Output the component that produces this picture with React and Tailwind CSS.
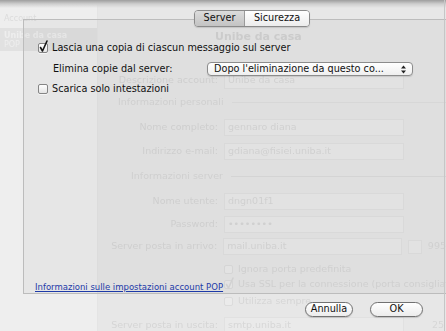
import React from "react"

function Check({ checked, ghost }) {
  return (
    <span
      className={
        ghost
          ? "relative w-[9px] h-[9px] shrink-0 rounded-[2px] border border-[#dcdcdc] bg-[#ebebeb]"
          : "relative w-[10px] h-[10px] shrink-0 rounded-[2px] border border-[#858585] bg-linear-to-b from-white to-[#e4e4e4] shadow-[0_1px_0_rgba(255,255,255,0.6)]"
      }
    >
      {checked && (
        <svg className="absolute -left-[2px] -top-[5px]" width="13" height="15" viewBox="0 0 13 15">
          <path
            d="M3.5 8.5 L5.5 12 L10 2"
            stroke={ghost ? "#d8d8d8" : "#151515"}
            strokeWidth="1.6"
            fill="none"
            strokeLinecap="round"
            strokeLinejoin="round"
          />
        </svg>
      )}
    </span>
  )
}

function GhostField({ label, value, extra }) {
  return (
    <div className="flex items-center gap-[6px] h-[17px] whitespace-nowrap">
      <span className="w-[120px] text-right text-[#d5d5d5]">{label}</span>
      <span className="w-[180px] h-full border border-[#e1e1e1] bg-[#eaeaea] px-[3px] flex items-center text-[#d7d7d7]">
        {value}
      </span>
      {extra}
    </div>
  )
}

function Ghost() {
  return (
    <div className="flex h-full blur-[0.7px] text-[9.5px] whitespace-nowrap">
      <div className="w-[97px] shrink-0 bg-[#eeeeee] flex flex-col">
        <div className="mt-[13px] pl-[4px] text-[8px] text-[#dcdcdc]">Account</div>
        <div className="mt-[3px] h-[23px] bg-[#e1e1e1] pl-[4px] flex flex-col justify-center text-[#eeeeee] text-[8px] leading-[9px]">
          <span className="font-bold">Unibe da casa</span>
          <span>POP</span>
        </div>
      </div>
      <div className="flex-1 bg-[#e7e7e7] border-l border-[#e4e4e4] flex flex-col overflow-hidden">
        <div className="mt-[30px] h-[15px] pl-[117px] flex items-center font-bold text-[11px] text-[#d2d2d2]">
          Unibe da casa
        </div>
        <div className="mt-[27px]">
          <GhostField label="Descrizione account:" value="Unibe da casa" />
        </div>
        <div className="mt-[7px] h-[12px] pl-[20px] flex items-center text-[#d6d6d6]">
          <span>Informazioni personali</span>
          <span className="flex-1 h-px bg-[#dedede] ml-[8px]" />
        </div>
        <div className="mt-[11px]">
          <GhostField label="Nome completo:" value="gennaro diana" />
        </div>
        <div className="mt-[7px]">
          <GhostField label="Indirizzo e-mail:" value="gdiana@fisiei.uniba.it" />
        </div>
        <div className="mt-[10px] h-[12px] pl-[33px] flex items-center text-[#d6d6d6]">
          <span>Informazioni server</span>
          <span className="flex-1 h-px bg-[#dbdbdb] ml-[8px]" />
        </div>
        <div className="mt-[11px]">
          <GhostField label="Nome utente:" value="dngn01f1" />
        </div>
        <div className="mt-[6px]">
          <GhostField label="Password:" value="••••••••" />
        </div>
        <div className="mt-[5px]">
          <GhostField
            label="Server posta in arrivo:"
            value="mail.uniba.it"
            extra={
              <>
                <span className="w-[14px] h-[14px] shrink-0 border border-[#e1e1e1] bg-[#eaeaea]" />
                <span className="text-[#d7d7d7]">995</span>
              </>
            }
          />
        </div>
        <div className="mt-[8px] h-[12px] pl-[126px] flex items-center gap-[5px] text-[#d6d6d6]">
          <Check ghost />
          <span>Ignora porta predefinita</span>
        </div>
        <div className="mt-[3px] h-[12px] pl-[126px] flex items-center gap-[5px] text-[#d6d6d6]">
          <Check ghost checked />
          <span>Usa SSL per la connessione (porta consigliata)</span>
        </div>
        <div className="mt-[5px] h-[12px] pl-[126px] flex items-center gap-[5px] text-[#d6d6d6]">
          <Check ghost />
          <span>Utilizza sempre</span>
        </div>
        <div className="mt-[10px]">
          <GhostField
            label="Server posta in uscita:"
            value="smtp.uniba.it"
            extra={<span className="ml-[22px] text-[#d7d7d7]">25</span>}
          />
        </div>
      </div>
    </div>
  )
}

export default function App() {
  return (
    <div className="relative w-[446px] h-[331px] overflow-hidden bg-[#eeeeee] font-['DejaVu_Sans','Liberation_Sans',sans-serif]">
      <Ghost />

      <div className="absolute inset-0 flex flex-col">
        <div className="ml-[23px] mt-[19px] w-[458px] h-[275px] shrink-0 border border-[#bcbcbc] bg-black/[0.03] flex flex-col text-[9.7px] text-[#111]">
          <div className="-mt-[10px] flex justify-center">
            <div className="flex h-[17px] rounded-[4px] border border-[#8a8a8a] overflow-hidden shadow-[0_1px_1px_rgba(0,0,0,0.12)]">
              <span className="w-[50px] flex items-center justify-center bg-linear-to-b from-[#dcdcdc] to-[#c3c3c3] border-r border-[#9a9a9a]">
                Server
              </span>
              <span className="w-[64px] flex items-center justify-center bg-linear-to-b from-white to-[#ececec]">
                Sicurezza
              </span>
            </div>
          </div>

          <div className="mt-[14px] h-[14px] pl-[14px] flex items-center gap-[4px]">
            <Check checked />
            <span>Lascia una copia di ciascun messaggio sul server</span>
          </div>

          <div className="mt-[7px] h-[14px] pl-[29px] flex items-center">
            <span className="w-[154px]">Elimina copie dal server:</span>
            <div className="w-[206px] h-[14px] rounded-[4px] border border-[#8c8c8c] bg-linear-to-b from-white to-[#efefef] shadow-[0_1px_1px_rgba(0,0,0,0.12)] flex items-center pl-[6px]">
              <span className="flex-1">Dopo l'eliminazione da questo co...</span>
              <svg className="mr-[6px]" width="5" height="9" viewBox="0 0 5 9">
                <path d="M0 3.5 L2.5 0.5 L5 3.5 Z" fill="#222" />
                <path d="M0 5.5 L2.5 8.5 L5 5.5 Z" fill="#222" />
              </svg>
            </div>
          </div>

          <div className="mt-[6px] h-[14px] pl-[14px] flex items-center gap-[4px]">
            <Check />
            <span>Scarica solo intestazioni</span>
          </div>

          <div className="mt-auto pl-[11px] h-[11px] leading-[11px] text-[8.5px]">
            <span className="text-[#1d3aa8] underline">Informazioni sulle impostazioni account POP</span>
          </div>
        </div>

        <div className="mt-[8px] pr-[23px] flex justify-end gap-[17px] text-[9.7px] text-[#111]">
          <button className="w-[48px] h-[15px] rounded-full border border-[#717171] bg-linear-to-b from-white to-[#ececec] shadow-[0_1px_1px_rgba(0,0,0,0.15)] flex items-center justify-center">
            Annulla
          </button>
          <button className="w-[53px] h-[15px] rounded-full border border-[#717171] bg-linear-to-b from-white to-[#ececec] shadow-[0_1px_1px_rgba(0,0,0,0.15)] flex items-center justify-center">
            OK
          </button>
        </div>
      </div>

      <div className="absolute top-0 left-0 right-0 h-[8px] bg-linear-to-b from-[#9e9e9e] via-[#cfcfcf] to-transparent" />
      <div className="absolute top-0 bottom-0 left-[444px] w-px bg-[#c6c6c6]" />
    </div>
  )
}
